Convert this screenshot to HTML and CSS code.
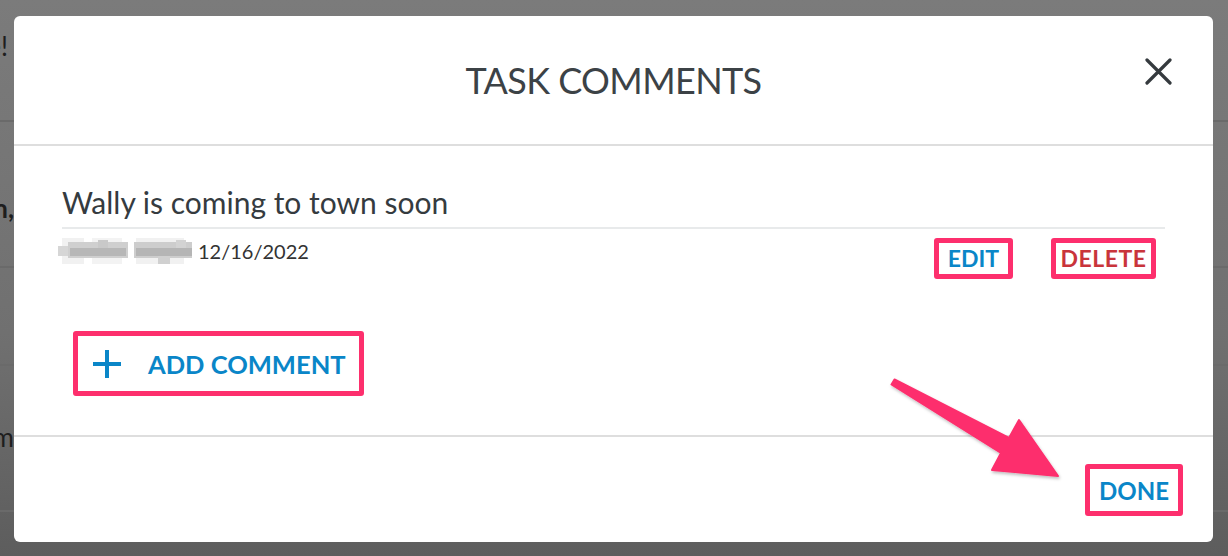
FILE: index.html
```html
<!DOCTYPE html>
<html lang="en">
<head>
<meta charset="utf-8">
<title>Task Comments</title>
<link rel="stylesheet" href="styles.css">
</head>
<body>
<div class="page">
  <div class="page-row row-1"><div class="clip clip-narrow"><span>Hi there!</span></div></div>
  <div class="page-row row-2"><div class="clip"><span>Good afternoon,</span></div></div>
  <div class="page-row row-3"></div>
  <div class="page-row row-4"><div class="clip"><span>Custom</span></div></div>
  <div class="page-row row-5"></div>
</div>

<div class="modal">
  <header class="modal-header">
    <span></span>
    <h1 class="modal-title">TASK COMMENTS</h1>
    <button class="close" aria-label="Close">
      <svg width="27" height="27" viewBox="0 0 27 27"><path d="M2 2 L25 25 M25 2 L2 25" stroke="#353a3e" stroke-width="3.2" stroke-linecap="round"/></svg>
    </button>
  </header>
  <section class="modal-body">
    <div class="comment">
      <p class="comment-text">Wally is coming to town soon</p>
      <div class="comment-meta">
        <div class="author">
          <svg class="blur" width="136" height="26" viewBox="0 0 136 26">
            <rect x="4" y="0" width="22" height="26" fill="#f1f1f1"/>
            <rect x="34" y="0" width="30" height="26" fill="#f3f3f3"/>
            <rect x="78" y="0" width="48" height="26" fill="#f1f1f1"/>
            <rect x="0" y="8" width="12" height="10" fill="#d6d6d6"/>
            <rect x="10" y="4" width="60" height="16" fill="#cfcfcf"/>
            <rect x="12" y="10" width="56" height="8" fill="#b7b7b7"/>
            <rect x="40" y="2" width="10" height="8" fill="#c9c9c9"/>
            <rect x="76" y="4" width="58" height="16" fill="#cdcdcd"/>
            <rect x="78" y="10" width="56" height="8" fill="#b5b5b5"/>
            <rect x="100" y="18" width="12" height="8" fill="#d0d0d0"/>
            <rect x="118" y="2" width="10" height="8" fill="#d3d3d3"/>
          </svg>
          <span class="date">12/16/2022</span>
        </div>
        <div class="actions">
          <button class="mark btn btn-edit">EDIT</button>
          <button class="mark btn btn-delete">DELETE</button>
        </div>
      </div>
    </div>
    <button class="mark btn btn-add">
      <svg width="30" height="30" viewBox="0 0 30 30"><path d="M15 1 V29 M1 15 H29" stroke="#0a86c8" stroke-width="4"/></svg>
      <span>ADD COMMENT</span>
    </button>
  </section>
  <footer class="modal-footer">
    <button class="mark btn btn-done">DONE</button>
  </footer>
</div>

<svg class="arrow" width="1228" height="556" viewBox="0 0 1228 556">
  <defs>
    <filter id="sh" x="-10%" y="-10%" width="120%" height="120%">
      <feDropShadow dx="1" dy="2" stdDeviation="1.5" flood-color="#000" flood-opacity="0.25"/>
    </filter>
  </defs>
  <polygon filter="url(#sh)" fill="#fd2f6d" stroke="#fd2f6d" stroke-width="2" stroke-linejoin="round"
    points="891.5,384.5 894.5,379.5 1009,438 1019,420 1058,476 992,470 1001,453"/>
</svg>
</body>
</html>
```
FILE: styles.css
```css
* { box-sizing: border-box; }
html, body { margin: 0; padding: 0; }
body {
  width: 1228px;
  height: 556px;
  overflow: hidden;
  position: relative;
  font-family: "Lato", "Liberation Sans", sans-serif;
  background: linear-gradient(#7b7b7b, #707070 60%, #5d5d5d);
}
.page { display: flex; flex-direction: column; }
.page-row { border-bottom: 2px solid #6a6a6a; }
.row-1 { height: 122px; padding-top: 30px; }
.row-2 { height: 146px; padding-top: 70px; }
.row-3 { height: 98px; }
.row-4 { height: 146px; padding-top: 55px; }
.row-5 { height: 44px; border-bottom: none; }
.clip {
  width: 14px;
  overflow: hidden;
  display: flex;
  justify-content: flex-end;
  white-space: nowrap;
  font-size: 26px;
  color: #1e1e1e;
}
.clip-narrow { width: 8px; }
.row-2 .clip { font-weight: 700; }
.clip span { flex: none; }

.modal {
  position: absolute;
  left: 14px;
  top: 16px;
  width: 1199px;
  height: 526px;
  background: #fff;
  border-radius: 6px;
  display: flex;
  flex-direction: column;
}
.modal-header {
  height: 130px;
  border-bottom: 2px solid #dedede;
  display: grid;
  grid-template-columns: 1fr auto 1fr;
  align-items: center;
}
.modal-title {
  margin: 0;
  font-size: 36px;
  font-weight: 400;
  color: #3c4246;
  letter-spacing: -0.6px;
}
.close {
  justify-self: end;
  align-self: start;
  margin-top: 42px;
  margin-right: 41px;
  border: 0;
  background: none;
  padding: 0;
  width: 27px;
  height: 27px;
  display: block;
}
.close svg { display: block; }

.modal-body {
  height: 291px;
  border-bottom: 2px solid #dedede;
  padding: 38px 48px 0 48px;
}
.comment-text {
  margin: 0;
  font-size: 30px;
  line-height: 36px;
  color: #353b3f;
  padding-bottom: 7px;
  border-bottom: 2px solid #e8eaeb;
}
.comment-meta {
  display: flex;
  justify-content: space-between;
  align-items: flex-start;
  padding-top: 9px;
}
.author { display: flex; align-items: center; margin-left: -4px; }
.blur { display: block; }
.date { font-size: 20px; color: #333; margin-left: 4px; }
.actions { display: flex; gap: 38px; margin-right: 9px; margin-top: 0; }

.btn {
  font-family: "Lato", "Liberation Sans", sans-serif;
  font-weight: 700;
  background: #fff;
  cursor: pointer;
}
.mark {
  border: 5px solid #fd2f6d;
  border-radius: 3px;
}
.btn-edit, .btn-delete {
  height: 41px;
  font-size: 23px;
  padding: 0 0 2px 0;
}
.btn-edit { color: #0a86c8; width: 79px; }
.btn-delete { color: #c9343b; width: 105px; letter-spacing: 0.5px; }
.btn-add {
  margin-top: 52px;
  margin-left: 11px;
  width: 291px;
  height: 65px;
  display: flex;
  align-items: center;
  gap: 26px;
  padding: 0 0 0 14px;
  color: #0a86c8;
  font-size: 25.5px;
}
.btn-add svg { display: block; }

.modal-footer {
  flex: 1;
  display: flex;
  justify-content: flex-end;
  align-items: flex-start;
  padding: 27px 30px 0 0;
}
.btn-done {
  width: 98px;
  height: 52px;
  color: #0a86c8;
  font-size: 24px;
  padding: 0;
}

.arrow {
  position: absolute;
  left: 0;
  top: 0;
  pointer-events: none;
}
```
